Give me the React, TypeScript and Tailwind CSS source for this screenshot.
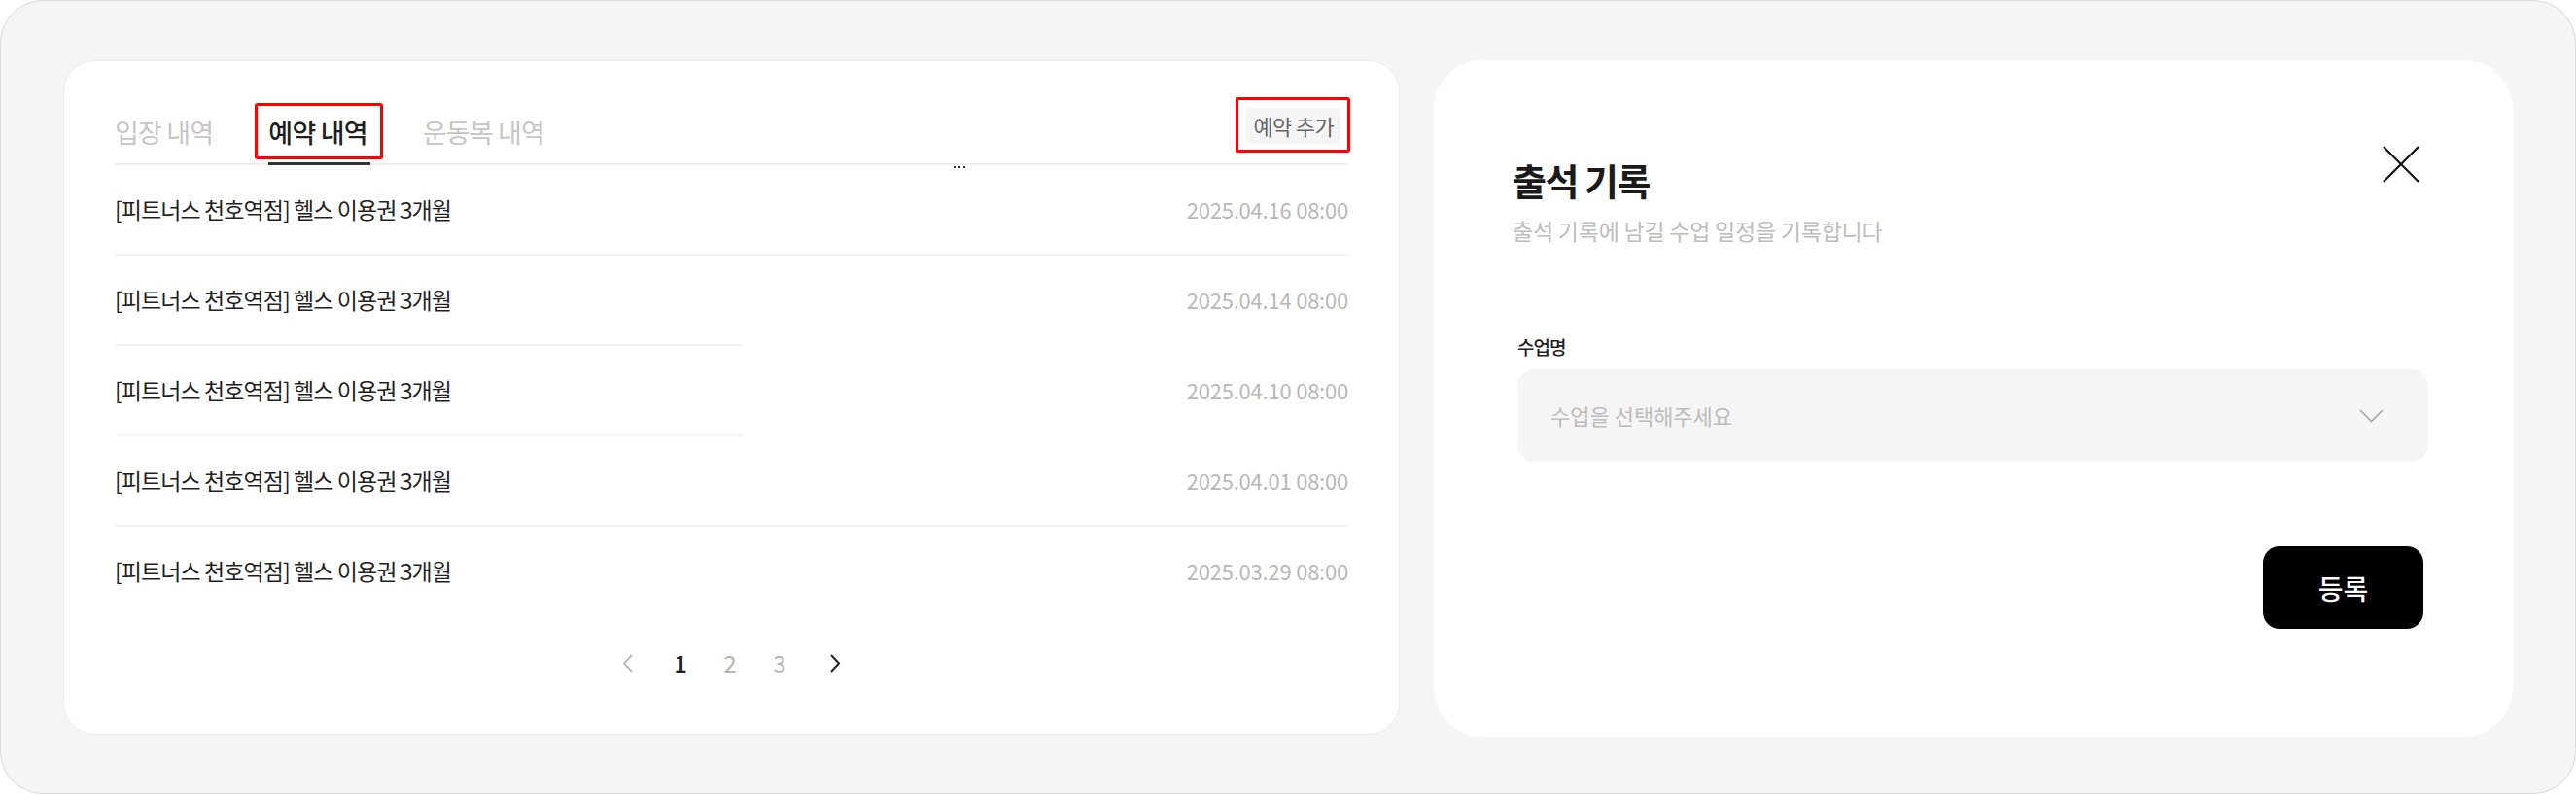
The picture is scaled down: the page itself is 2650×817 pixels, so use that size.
const rows = [
  { title: "[피트너스 천호역점] 헬스 이용권 3개월", date: "2025.04.16 08:00", line: "full" },
  { title: "[피트너스 천호역점] 헬스 이용권 3개월", date: "2025.04.14 08:00", line: "half" },
  { title: "[피트너스 천호역점] 헬스 이용권 3개월", date: "2025.04.10 08:00", line: "half" },
  { title: "[피트너스 천호역점] 헬스 이용권 3개월", date: "2025.04.01 08:00", line: "full" },
  { title: "[피트너스 천호역점] 헬스 이용권 3개월", date: "2025.03.29 08:00", line: "none" },
];

const ChevronLeft = () => (
  <svg width="11" height="19" viewBox="0 0 11 19" fill="none">
    <path d="M10 1L2 9.5L10 18" stroke="#aaaaaa" strokeWidth="1.6" />
  </svg>
);

const ChevronRight = () => (
  <svg width="11" height="19" viewBox="0 0 11 19" fill="none">
    <path d="M1 1L9 9.5L1 18" stroke="#222222" strokeWidth="2" />
  </svg>
);

const CloseIcon = () => (
  <svg width="38" height="38" viewBox="0 0 38 38" fill="none">
    <path d="M1 1L37 37M37 1L1 37" stroke="#111111" strokeWidth="2.2" />
  </svg>
);

const ChevronDown = () => (
  <svg width="25" height="14" viewBox="0 0 25 14" fill="none">
    <path d="M1 1L12.5 12.5L24 1" stroke="#a6a6a6" strokeWidth="1.6" />
  </svg>
);

const ReservationHistory = () => {
  return (
    <div className="relative w-[1375px] h-[694px] shrink-0 bg-white rounded-[32px] border border-[#ececec] px-[52px] pt-[37px]">
      {/* 탭 */}
      <div className="flex items-start justify-between border-b-2 border-[#efefef]">
        <div className="flex items-center gap-[57px] text-[27px] tracking-[-0.03em]">
          <button className="h-[68px] flex items-center pt-[4px] text-[#c6c6c6]">입장 내역</button>
          <button className="relative h-[68px] flex items-center pt-[4px] font-medium text-[#1f1f1f]">
            예약 내역
            <span className="absolute -left-[14px] -right-[16px] top-[6px] bottom-[4px] border-[3px] border-[#ff0000] rounded-[3px]" />
            <span className="absolute left-0 -right-[3px] -bottom-[2px] h-[3px] bg-[#333333]" />
          </button>
          <button className="h-[68px] flex items-center pt-[4px] text-[#c6c6c6]">운동복 내역</button>
        </div>
        <div className="relative mt-[11px] mr-[8px]">
          <span className="absolute -left-[11px] -right-[10px] -top-[11px] -bottom-[9px] border-[3px] border-[#ff0000] rounded-[3px]" />
          <button className="h-[37px] px-[7px] bg-[#f5f5f5] rounded-[4px] text-[22px] tracking-[-0.03em] text-[#666666]">
            예약 추가
          </button>
        </div>
      </div>

      <div className="absolute left-[915px] top-[108px] flex gap-[3px]">
        <span className="w-[2px] h-[2px] bg-[#333333]" />
        <span className="w-[2px] h-[2px] bg-[#333333]" />
        <span className="w-[2px] h-[2px] bg-[#333333]" />
      </div>

      {/* 목록 */}
      <ul>
        {rows.map((row, i) => (
          <li key={i}>
            <div className="h-[91px] flex items-center justify-between">
              <span className="text-[23px] tracking-[-0.04em] text-[#1f1f1f]">{row.title}</span>
              <span className="text-[22px] tracking-[-0.01em] text-[#b8b8b8]">{row.date}</span>
            </div>
            {row.line === "full" && <div className="h-[2px] w-full bg-[#f3f3f3]" />}
            {row.line === "half" && <div className="h-[2px] w-[646px] bg-[#f3f3f3]" />}
          </li>
        ))}
      </ul>

      {/* 페이지네이션 */}
      <div className="mt-[29px] h-[40px] flex items-center justify-center text-[24px]">
        <button className="w-[20px] flex justify-center mr-[19px]">
          <ChevronLeft />
        </button>
        <button className="w-[51px] text-center font-medium text-[#1f1f1f]">1</button>
        <button className="w-[51px] text-center text-[#b3b3b3]">2</button>
        <button className="w-[51px] text-center text-[#b3b3b3]">3</button>
        <button className="w-[20px] flex justify-center ml-[22px]">
          <ChevronRight />
        </button>
      </div>
    </div>
  );
};

const AttendanceForm = () => {
  return (
    <div className="flex-1 h-[696px] bg-white rounded-[50px] pl-[81px] pr-[87px] pt-[88px]">
      <div className="flex items-start justify-between">
        <div className="mt-[12px]">
          <h2 className="text-[38px] leading-[46px] font-bold tracking-[-0.04em] text-[#1a1a1a]">출석 기록</h2>
          <p className="mt-[14px] text-[23px] leading-[30px] tracking-[-0.01em] text-[#bdbdbd]">
            출석 기록에 남길 수업 일정을 기록합니다
          </p>
        </div>
        <button className="mr-[9px]">
          <CloseIcon />
        </button>
      </div>

      <div className="ml-[5px]">
        <label className="block mt-[92px] text-[19px] leading-[26px] font-medium tracking-[-0.05em] text-[#1f1f1f]">
          수업명
        </label>
        <button className="mt-[10px] w-full h-[95px] bg-[#f5f5f5] rounded-[18px] pl-[34px] pr-[46px] flex items-center justify-between">
          <span className="text-[22px] tracking-[0em] text-[#bcbcbc]">수업을 선택해주세요</span>
          <ChevronDown />
        </button>
        <div className="flex justify-end mt-[87px]">
          <button className="w-[165px] h-[85px] mr-[5px] bg-black rounded-[17px] text-[28px] font-medium text-white">
            등록
          </button>
        </div>
      </div>
    </div>
  );
}

export default function App() {
  return (
    <div className="w-[2650px] h-[817px] bg-[#f5f5f5] border border-[#d9d9d9] rounded-[44px] px-[64px] pt-[61px] flex items-start gap-[35px] font-['Noto_Sans_CJK_KR',sans-serif]">
      <ReservationHistory />
      <AttendanceForm />
    </div>
  );
}
